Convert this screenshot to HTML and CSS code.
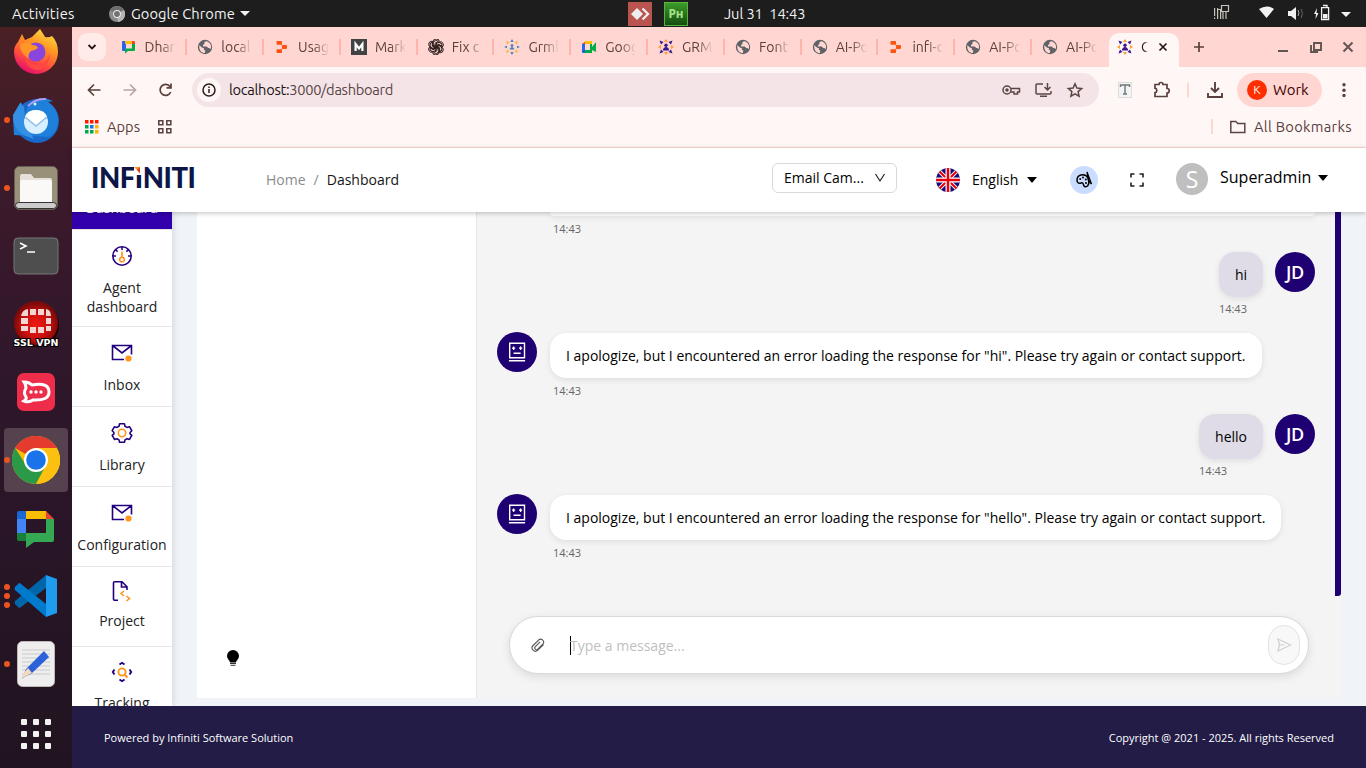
FILE: index.html
```html
<!DOCTYPE html>
<html lang="en">
<head>
<meta charset="utf-8">
<title>Dashboard</title>
<link rel="stylesheet" href="styles.css">
</head>
<body>
<svg width="0" height="0" class="defs">
  <symbol id="globe" viewBox="0 0 16 16"><circle cx="8" cy="8" r="7.2" fill="#5f6368"/><path d="M2.2 6.2l3.2 2.6 1.7.4-.3 1.6 1.5.8-.4 2.4C4.5 14 2 11.500 2.200 6.200zM9 2.200l-1.800 1.300.4 1.600-1.700 1 .2 1.300 3.600.1 1.500 1.600 1.800.2.800 1C15 6 12.800 2.800 9 2.200z" fill="#ffd6d1"/></symbol>
  <symbol id="branch" viewBox="0 0 16 16"><g fill="#ff5310"><rect x="2.500" y="2" width="5.500" height="3.800" rx=".8"/><rect x="8" y="6.100" width="5" height="3.800" rx=".8"/><rect x="2.500" y="10.200" width="5.500" height="3.800" rx=".8"/><path d="M7.500 5l1.500 1.500h-1.500zM7.500 11l1.500-1.500h-1.500z"/></g></symbol>
  <symbol id="people" viewBox="0 0 16 16"><g fill="#ff9d2e"><path d="M8 0l2 3H6zM8 16l2-3H6zM0 8l3-2v4zM16 8l-3-2v4z"/></g><g fill="#3a168c"><circle cx="8" cy="6.300" r="1.700"/><path d="M4.800 11.500q.5-3.500 3.200-3.500t3.200 3.500z"/><path d="M1.500 1.500l4 1.500L3 5.500zM14.500 1.500l-4 1.500L13 5.500zM1.500 14.500l4-1.500L3 10.500zM14.500 14.500l-4-1.500 2.500-2.500z"/></g></symbol>
  <symbol id="people2" viewBox="0 0 16 16"><g fill="#f5b82e"><path d="M2 2l3.500 1.200L3.200 5.500zM14 2l-3.500 1.200 2.300 2.300zM2 14l3.500-1.200-2.300-2.300zM14 14l-3.500-1.200 2.300-2.300z"/></g><g fill="#4a7db8"><circle cx="8" cy="6.600" r="1.400"/><path d="M5.500 10.500q.5-2.500 2.500-2.500t2.500 2.500zM8 0l1.600 3H6.400zM8 16l1.600-3H6.400zM0 8l3-1.300v2.600zM16 8l-3-1.300v2.600z"/></g></symbol>
  <symbol id="mail" viewBox="0 0 24 20"><path d="M21.500 11.500V2.500h-19v14H14M2.500 2.500l9.500 7.500 9.500-7.500" fill="none" stroke="#24007d" stroke-width="1.600"/><circle cx="18.500" cy="15.500" r="3.100" fill="#ff951c"/></symbol>
  <symbol id="bot" viewBox="0 0 20 22"><path d="M2.700 2.200h14.800v14.600H2.700zM1.900 19.700h16.200M6.600 12.300h7" fill="none" stroke="#fff" stroke-width="1.400"/><path d="M6.600 5.500v3.400M13.600 5.500v3.400M5 7.200h3.200M12 7.200h3.200" stroke="#fff" stroke-width="1.300"/></symbol>
</svg>

<div class="topbar">
  <span class="tb-act">Activities</span>
  <svg class="tb-chrome" width="16" height="16" viewBox="0 0 16 16"><circle cx="8" cy="8" r="8" fill="#8b8b8b"/><path d="M8 8L1 4a8 8 0 0 1 14 0z" fill="#6d6d6d"/><path d="M8 8l7-4a8 8 0 0 1-6 12z" fill="#b5b5b5"/><circle cx="8" cy="8" r="3.900" fill="#eee"/><circle cx="8" cy="8" r="2.900" fill="#707070"/></svg>
  <span class="tb-app">Google Chrome</span><i class="tri tb-tri1"></i>
  <svg class="tb-any" width="24" height="24" viewBox="0 0 24 24"><rect width="24" height="24" fill="#b9544e"/><path d="M9 6l6 6-6 6-6-6z" fill="#eee"/><path d="M14.500 6.500L20 12l-5.500 5.500" fill="none" stroke="#eee" stroke-width="2.300"/></svg>
  <span class="tb-ph">Pʜ</span>
  <span class="tb-date">Jul 31&nbsp; 14:43</span>
  <svg class="tb-tray" width="144" height="18" viewBox="0 0 144 18"><g fill="none" stroke="#c8c4bc" stroke-width="1.200"><path d="M1.600 4v8m0 1.500v1.500M4.600 4v11M4.600 5.500h3V15M8.500 1.500h7v6h-7zM10 15V8M13 15V8"/></g><path d="M46 5q8-5 15 0l-7.500 9z" fill="#f2f2f2"/><path d="M75 7h3l5-4v13l-5-4h-3z" fill="#f2f2f2"/><path d="M85 6q2 3 0 6" fill="none" stroke="#aaa"/><path d="M88 5q3 4 0 9" fill="none" stroke="#666"/><path d="M104 4l-3 6h2l-.5 5 3-6h-2z" fill="#f2f2f2"/><path d="M108.600 3.600h7v12h-7zM110 1.500h4v2" fill="none" stroke="#f2f2f2" stroke-width="1.300"/><path d="M110 10h4.500v4.500H110z" fill="#f2f2f2"/><path d="M128 8h10l-5 5z" fill="#f2f2f2"/></svg>
</div>

<div class="desk">
<div class="dock">
  <div class="cell"><svg width="48" height="48" viewBox="0 0 48 48"><defs><linearGradient id="ff" x1=".8" y1="0" x2=".3" y2="1"><stop offset="0" stop-color="#ffe14a"/><stop offset=".35" stop-color="#ff9a22"/><stop offset=".7" stop-color="#ff4b3d"/><stop offset="1" stop-color="#e30a72"/></linearGradient></defs><path d="M6 14L10 6l3 6 7-3 4-4 4-4q4 6 5 8 4 1 7-1 6 6 6 16a22 22 0 0 1-44 0q0-6 4-10z" fill="url(#ff)"/><circle cx="24" cy="24" r="9.500" fill="#8a45dc"/><path d="M8 16q9-4 12 1 5 0 6 3-4 3-7 3-4 4-2 8-9-5-9-15z" fill="#ff9626"/><path d="M13 25q1 11 12 12 10 0 13-12-1 17-14 17-12-3-11-17z" fill="#ff4745"/></svg></div>
  <div class="cell"><b class="d1"></b><svg width="48" height="48" viewBox="0 0 48 48"><circle cx="25" cy="25" r="22" fill="#1869c9"/><path d="M2 39L1 20l8-14q3 5 4 12L17 9q6-8 16-7l8 3-5 1q10 7 10 18 0 12-9 17z" fill="#1f80dc"/><path d="M8 7l4 4q1 12 1 18l9 14Q0 37 1 19z" fill="#3490e5"/><circle cx="24" cy="26" r="12" fill="#d8efff"/><path d="M13 21l11 9 11-9q-2-7-11-7t-11 7z" fill="#fff"/><path d="M13 21l11 9 11-9" fill="none" stroke="#91bce8" stroke-width="1.500"/><path d="M16 10Q24 2 34 3" fill="none" stroke="#b09cf0" stroke-width="2"/><circle cx="23" cy="8" r="1.500" fill="#dceeff"/></svg></div>
  <div class="cell"><b class="d1"></b><svg width="48" height="48" viewBox="0 0 48 48"><rect x="2.500" y="2.500" width="43" height="43" rx="5" fill="#989079" stroke="#676052"/><path d="M8 12q0-2 2-2h9l3 4h16q2 0 2 2v22H8z" fill="#e5e1da"/><rect x="8" y="16" width="32" height="24" rx="2" fill="#faf9f7"/><rect x="3.500" y="38.500" width="41" height="6" rx="3" fill="#ccc" stroke="#333"/></svg></div>
  <div class="cell"><svg width="48" height="48" viewBox="0 0 48 48"><rect x="2" y="6" width="44" height="36" rx="4" fill="#4e4e4e" stroke="#777"/><path d="M8 11l6 3-6 3M15 20h8" fill="none" stroke="#fff" stroke-width="1.600"/></svg></div>
  <div class="cell"><svg width="48" height="48" viewBox="0 0 48 48"><defs><radialGradient id="sv" cx=".5" cy=".55"><stop offset="0" stop-color="#f01b12"/><stop offset=".6" stop-color="#c9100d"/><stop offset="1" stop-color="#7d0a0a"/></radialGradient></defs><circle cx="25" cy="25" r="22" fill="#200"/><circle cx="24" cy="23" r="22" fill="url(#sv)"/><g fill="#f3d5d3"><rect x="18" y="9" width="6" height="6"/><rect x="26" y="9" width="6" height="6"/><rect x="18" y="27" width="6" height="6"/><rect x="26" y="27" width="6" height="6"/><rect x="9" y="18" width="7" height="6"/><rect x="9" y="26" width="7" height="5"/><rect x="34" y="18" width="5" height="6"/><rect x="34" y="26" width="5" height="5"/><path d="M16 9v7H9q1-6 7-7zM34 9v7h5q0-6-5-7z"/></g><text x="24" y="46" text-anchor="middle" class="ssl">SSL VPN</text></svg></div>
  <div class="cell"><svg width="48" height="48" viewBox="0 0 48 48"><rect x="5" y="5" width="38" height="38" rx="7" fill="#ed2d49"/><path d="M12 14q5 0 8 3 17-3 17 7 0 9-16 8-4 3-9 1 3-2 2-4-3-4 0-9 0-3-2-6z" fill="none" stroke="#fff" stroke-width="3"/><g fill="#fff"><circle cx="19" cy="24" r="1.700"/><circle cx="24" cy="24" r="1.700"/><circle cx="29" cy="24" r="1.700"/></g></svg></div>
  <div class="cell"><b class="d1"></b><div class="activeapp"><svg width="48" height="48" viewBox="0 0 48 48"><circle cx="24" cy="24" r="24" fill="#fdbd00"/><path d="M24 24L3.200 12a24 24 0 0 1 41.600 0z" fill="#e33b2e"/><path d="M3.200 12L14.500 30 24 24l9.500 6L24 48A24 24 0 0 1 3.200 12z" fill="#2a9a48"/><path d="M34.400 30L24 48a24 24 0 0 0 20.800-36H24z" fill="#fcc010"/><circle cx="24" cy="24" r="12" fill="#fff"/><circle cx="24" cy="24" r="9.800" fill="#1a73e8"/></svg></div></div>
  <div class="cell"><svg width="48" height="48" viewBox="0 0 48 48"><path d="M5 9q0-2 2-2h7v8H5z" fill="#1967d2"/><path d="M14 7h20v8H14z" fill="#fbbc04"/><path d="M34 7l8 8h-8z" fill="#ea4335"/><path d="M5 15h9v14H5z" fill="#4285f4"/><path d="M5 29h9v8H7q-2 0-2-2z" fill="#188038"/><path d="M34 15h8v21q0 2-2 2H22l-8 6V29h20z" fill="#34a853"/></svg></div>
  <div class="cell"><b class="d1 dm"></b><b class="d1"></b><b class="d1 dp"></b><svg width="48" height="48" viewBox="0 0 48 48"><path d="M3 32l4 4q1 0 2-1L34 16V3L3 29q-1 1 0 3z" fill="#0065a9"/><path d="M3 15l4-4q1 0 2 1l25 20v13L3 18q-1-1 0-3z" fill="#007acc"/><path d="M34 3l11 4v34l-11 4z" fill="#1f9cf0"/></svg></div>
  <div class="cell"><b class="d1"></b><svg width="48" height="48" viewBox="0 0 48 48"><rect x="5.500" y="1.500" width="37" height="45" rx="5" fill="#eee" stroke="#bdb8b5"/><path d="M10 10h28M10 14h28M10 18h28M10 22h28M10 26h28M10 30h28M10 34h28" stroke="#c9c9c9"/><path d="M32 11l5 6-18 17-7 3-2 2 1-3 3-7z" fill="#2b62d9"/><path d="M16 28l4 5-8 4-3 2 2-5z" fill="#f5d9b8"/></svg></div>
  <div class="cell last"><svg width="30" height="30" viewBox="0 0 30 30" fill="#f2f2f0"><g id="r3"><rect width="6" height="6" rx="1"/><rect x="12" width="6" height="6" rx="1"/><rect x="24" width="6" height="6" rx="1"/></g><use href="#r3" y="12"/><use href="#r3" y="24"/></svg></div>
</div>

<div class="browser">
  <div class="tabs">
    <div class="tabmenu"><svg width="10" height="10" viewBox="0 0 10 10"><path d="M1.500 3L5 6.500 8.500 3" fill="none" stroke="#2b1512" stroke-width="1.800"/></svg></div>
    <div class="tab"><svg viewBox="0 0 16 16"><path d="M1 3q0-1 1-1h3v10H2q-1 0-1-1z" fill="#2a62ee"/><path d="M4 2h9q1 0 1 1v2H4z" fill="#fbbc04"/><path d="M11 5h3v6q0 1-1 1H7l-3 2.500V9.500h7z" fill="#00ac47"/><path d="M11 2h2l1 1v2h-3z" fill="#ea4335"/></svg><span>Dhar</span></div>
    <div class="tab"><svg><use href="#globe"/></svg><span>local</span></div>
    <div class="tab"><svg><use href="#branch"/></svg><span>Usag</span></div>
    <div class="tab"><svg viewBox="0 0 16 16"><rect width="16" height="16" fill="#424242"/><path d="M4.600 12V5L8 9.500 11.400 5v7" fill="none" stroke="#fff" stroke-width="2.200"/></svg><span>Mark</span></div>
    <div class="tab"><svg viewBox="0 0 16 16" fill="none" stroke="#33221f" stroke-width="1"><g id="petal"><path d="M8 4.800L11.300 3a3 3 0 0 1 2.900 5.200M8 4.800V8.300l3 1.800M5.300 3.600a3 3 0 0 1 5-1.100L7 4.300v3.900"/></g><use href="#petal" transform="rotate(120 8 8)"/><use href="#petal" transform="rotate(240 8 8)"/><use href="#petal" transform="rotate(60 8 8)"/><use href="#petal" transform="rotate(180 8 8)"/><use href="#petal" transform="rotate(300 8 8)"/></svg><span>Fix c</span></div>
    <div class="tab"><svg><use href="#people2"/></svg><span>Grml</span></div>
    <div class="tab"><svg viewBox="0 0 16 16"><path d="M1 5l4-3v3z" fill="#ea4335"/><path d="M1 5h3v6H1z" fill="#2a62ee"/><path d="M1 11h3v3H2q-1 0-1-1z" fill="#1967d2"/><path d="M4 2h7v3H4z" fill="#fbbc04"/><path d="M4 11h7V8l4-5v10l-4-2v3H4z" fill="#00ac47"/><path d="M9 5h2v6H9z" fill="#00ac47"/></svg><span>Goog</span></div>
    <div class="tab"><svg><use href="#people"/></svg><span>GRM</span></div>
    <div class="tab"><svg><use href="#globe"/></svg><span>Font</span></div>
    <div class="tab"><svg><use href="#globe"/></svg><span>AI-Po</span></div>
    <div class="tab"><svg><use href="#branch"/></svg><span>infi-c</span></div>
    <div class="tab"><svg><use href="#globe"/></svg><span>AI-Po</span></div>
    <div class="tab nosep"><svg><use href="#globe"/></svg><span>AI-Po</span></div>
    <div class="tab on"><svg><use href="#people"/></svg><span>C</span><svg class="x" viewBox="0 0 10 10"><path d="M1.500 1.500l7 7m0-7l-7 7" stroke="#2b1512" stroke-width="1.700"/></svg></div>
    <svg class="winctl" width="170" height="20" viewBox="0 0 170 20" fill="none" stroke="#5f5552" stroke-width="2"><path d="M14 10h10M19 5v10" stroke="#5a403c" stroke-width="1.700"/><path d="M98 14h10M134 6h7v7h-7zM131 8v7h7" stroke-width="1.900"/><path d="M163.500 5.500l9 9m0-9l-9 9" stroke-width="1.900"/></svg>
  </div>
  <div class="toolbar">
    <svg class="nav" width="100" height="20" viewBox="0 0 100 20" fill="none" stroke-width="1.700"><path d="M21.500 10H10M15 4.500L9.500 10l5.500 5.500" stroke="#5a403c"/><path d="M44.500 10h11.500M51 4.500l5.500 5.500-5.500 5.500" stroke="#b9a5a2"/><path d="M91 6.500A5.500 5.500 0 1 0 91.700 12M92 3.500v4.300h-4.500" stroke="#5a403c"/></svg>
    <div class="url">
      <span class="info"><svg width="16" height="16" viewBox="0 0 16 16" fill="none" stroke="#2b1c1a" stroke-width="1.500"><circle cx="8" cy="8" r="6"/><path d="M8 7v4M8 4.500v1.400"/></svg></span>
      <span class="addr">localhost:<em>3000/dashboard</em></span>
      <svg class="urlic" width="84" height="20" viewBox="0 0 84 20" fill="none" stroke="#5a4543" stroke-width="1.500"><circle cx="6" cy="10" r="4"/><circle cx="6" cy="10" r="1" fill="#5a4543"/><path d="M10 8.500h8.500V12h-2v2H13v-2h-3"/><path d="M42 4h-6q-1 0-1 1v8q0 1 1 1h13q1 0 1-1v-2M39 16.200h7M46.500 3v7m-3-3l3 3 3-3"/><path d="M74 3.800l1.900 4.300 4.700.4-3.500 3.100 1 4.600-4.100-2.400-4.100 2.400 1-4.600-3.500-3.100 4.700-.4z"/></svg>
    </div>
    <svg class="ext" width="120" height="24" viewBox="0 0 120 24" fill="none" stroke="#5a403c" stroke-width="1.700"><rect x="6.500" y="4.500" width="13" height="15" fill="#f4f4f4" stroke="#ddd" stroke-width="1"/><path d="M8.500 9V7h9v2M13 7v9m-2 0h4" stroke="#6d7878" stroke-width="1.400"/><path d="M43 6.500h4a2 2 0 0 1 4 0h4v4a2 2 0 0 1 0 4.500v3.500H43v-3.800a2.300 2.300 0 0 0 0-4.500z"/><path d="M76 4.500v15" stroke="#ffd0ca"/><path d="M103 4v10m-4-4l4 4 4-4M96 15v4h14v-4" stroke-width="1.900"/></svg>
    <div class="work"><i>K</i><span>Work</span></div>
    <svg class="dots" width="6" height="18" viewBox="0 0 6 18" fill="#5a403c"><circle cx="3" cy="3.800" r="1.700"/><circle cx="3" cy="9.200" r="1.700"/><circle cx="3" cy="14.500" r="1.700"/></svg>
  </div>
  <div class="marks">
    <svg width="14" height="14" viewBox="0 0 14 14"><path fill="#ff1a00" d="M0 0h3.500v3.500H0zM5 0h3.500v3.500H5zM10 0h3.500v3.500H10z"/><path fill="#00a651" d="M0 5h3.500v3.500H0zM0 10h3.500v3.500H0zM5 10h3.500v3.500H5z"/><path fill="#1a73e8" d="M5 5h3.500v3.500H5z"/><path fill="#fbb400" d="M10 5h3.500v3.500H10zM10 10h3.500v3.500H10z"/></svg>
    <span class="apps">Apps</span>
    <svg width="16" height="16" viewBox="0 0 16 16" fill="none" stroke="#5a4543" stroke-width="1.600"><path d="M1.800 1.800h4v4h-4zM9.800 1.800h4v4h-4zM1.800 9.800h4v4h-4zM9.800 9.800h4v4h-4z"/></svg>
    <i class="msep"></i>
    <svg width="18" height="14" viewBox="0 0 18 14" fill="none" stroke="#5a4543" stroke-width="1.500"><path d="M1.800 1.500h5l2 2h7v9h-14z"/></svg>
    <span class="allb">All Bookmarks</span>
  </div>

  <div class="apphead">
    <div class="logo"><span>INFINITI</span><svg width="8" height="8" viewBox="0 0 8 8"><path d="M0 0h8v8H0z" fill="#fff"/><path d="M0 0h6L4 4z" fill="#f59b1d"/><path d="M3 3l3-3v6.500z" fill="#e2382c"/></svg></div>
    <div class="crumb"><span>Home</span><i>/</i><b>Dashboard</b></div>
    <div class="select"><span>Email Cam...</span><svg width="12" height="10" viewBox="0 0 12 10"><path d="M1.500 1L6 8l4.500-7" fill="none" stroke="#222" stroke-width="1.200"/></svg></div>
    <svg class="flag" width="24" height="24" viewBox="0 0 24 24"><defs><clipPath id="fc"><circle cx="12" cy="12" r="12"/></clipPath></defs><g clip-path="url(#fc)"><path fill="#1a0a78" d="M0 0h24v24H0z"/><path d="M0 0l24 24M24 0L0 24" stroke="#fff" stroke-width="4"/><path d="M0 0l24 24M24 0L0 24" stroke="#e8000b" stroke-width="2.200"/><path d="M12 0v24M0 12h24" stroke="#fff" stroke-width="5"/><path d="M12 0v24M0 12h24" stroke="#e8000b" stroke-width="2.500"/></g></svg>
    <span class="lang">English</span><i class="tri dark"></i>
    <span class="pal"><svg width="18" height="18" viewBox="0 0 18 18" fill="none" stroke="#000" stroke-width="1.500"><path d="M2 9q0-4 4-5 5-1 7 3 2 5-.5 8-3 2-4-1-.5-3-2.500-2-4 1-4-3z"/><path d="M12 1l4.500 12-3-3.500z" stroke-width="1.300"/><g fill="#000" stroke="none"><circle cx="5.200" cy="8" r="1"/><circle cx="8" cy="6.500" r="1"/><circle cx="10.800" cy="8.500" r="1"/><circle cx="11" cy="12" r="1"/></g></svg></span>
    <svg class="full" width="14" height="14" viewBox="0 0 14 14" fill="none" stroke="#222" stroke-width="1.600"><path d="M1 4.500V1h3.500M9.500 1H13v3.500M13 9.500V13H9.500M4.500 13H1V9.500"/></svg>
    <span class="ava">S</span>
    <span class="who">Superadmin</span><i class="tri dark up"></i>
  </div>

  <div class="main">
    <div class="side">
      <div class="item cur"><span>Dashboard</span></div>
      <div class="item agent"><svg width="24" height="24" viewBox="0 0 24 24" fill="none"><circle cx="12" cy="12" r="9.200" stroke="#24007d" stroke-width="1.600"/><path d="M12 3v3M3 12h3M18 12h3M5.600 5.600l2 2M18.400 5.600l-2 2" stroke="#24007d" stroke-width="1.500"/><circle cx="12" cy="15.500" r="2.300" stroke="#ff951c" stroke-width="1.600"/><path d="M12 13V7.500" stroke="#ff951c" stroke-width="1.700"/></svg><span>Agent<br>dashboard</span></div>
      <div class="item"><svg width="24" height="24" viewBox="0 -2 24 24"><use href="#mail" width="24" height="20"/></svg><span>Inbox</span></div>
      <div class="item"><svg width="24" height="24" viewBox="0 0 24 24" fill="none"><path d="M9.600 2.800h4.800l.6 2.500 2 1.100 2.500-.7 2.300 4-1.700 1.800v1.400l1.700 1.500-2.300 4-2.500-.7-2 1.200-.6 2.300H9.600L9 18.900l-2-1.200-2.500.7-2.300-4 1.700-1.500v-1.400L2.200 9.700l2.300-4 2.500.7 2-1.100z" stroke="#24007d" stroke-width="1.600" stroke-linejoin="round"/><circle cx="12" cy="12" r="3.700" stroke="#ff951c" stroke-width="1.600"/></svg><span>Library</span></div>
      <div class="item"><svg width="24" height="24" viewBox="0 -2 24 24"><use href="#mail" width="24" height="20"/></svg><span>Configuration</span></div>
      <div class="item proj"><svg width="24" height="24" viewBox="0 0 24 24" fill="none" stroke-width="1.600"><path d="M8 21.200H4.500q-1 0-1-1V3.800q0-1 1-1H12l5 5V11M11.500 3v5H17" stroke="#24007d"/><path d="M14 12l-3 2.500 3 2.500M16.500 17l3 2.500-3 2.500" stroke="#ff951c"/></svg><span>Project</span></div>
      <div class="item track"><svg width="24" height="24" viewBox="0 0 24 24" fill="none" stroke-width="1.900"><path d="M9.500 4.500L12 2.800l2.500 1.700M9.500 19.500l2.500 1.700 2.500-1.700M4.500 9.500L2.800 12l1.700 2.500M19.500 9.500l1.700 2.500-1.700 2.500" stroke="#24007d"/><circle cx="12" cy="12" r="3.600" stroke="#ff951c"/><path d="M14.500 14.500l3 3" stroke="#ff951c"/></svg><span>Tracking</span></div>
    </div>
    <div class="panel"><svg width="14" height="18" viewBox="0 0 14 18"><path d="M7 1a6 6 0 0 1 6 6q0 2.500-2 4.500-.8.700-1 2H4q-.2-1.300-1-2Q1 9.500 1 7a6 6 0 0 1 6-6z"/><path d="M4 14.500h6M4.500 16.300h5" stroke="#333" stroke-width="1"/></svg></div>
    <div class="chat">
      <div class="msgs">
        <div class="row bot first"><div><p class="bub"></p><small>14:43</small></div></div>
        <div class="row me r1"><div><p class="bub">hi</p><small>14:43</small></div><b class="av">JD</b></div>
        <div class="row bot r2"><b class="av"><svg width="20" height="22"><use href="#bot"/></svg></b><div><p class="bub">I apologize, but I encountered an error loading the response for "hi". Please try again or contact support.</p><small>14:43</small></div></div>
        <div class="row me r3"><div><p class="bub">hello</p><small>14:43</small></div><b class="av">JD</b></div>
        <div class="row bot r4"><b class="av"><svg width="20" height="22"><use href="#bot"/></svg></b><div><p class="bub">I apologize, but I encountered an error loading the response for "hello". Please try again or contact support.</p><small>14:43</small></div></div>
      </div>
      <div class="composer">
        <svg width="16" height="16" viewBox="0 0 16 16" fill="none" stroke="#555" stroke-width="1.100"><path d="M13.500 7.500l-5.700 5.700a3.300 3.300 0 0 1-4.700-4.700L8.800 2.800a3 3 0 0 1 4.200 4.200l-5.400 5.400a1.800 1.800 0 0 1-2.500-2.500l5-5"/></svg>
        <i class="caret"></i><span class="ph">Type a message...</span>
        <span class="send"><svg width="16" height="16" viewBox="0 0 16 16" fill="none" stroke="#cfcfcf" stroke-width="1.200"><path d="M2 2l12.500 6L2 14l1.500-6zM3.500 8h5"/></svg></span>
      </div>
    </div>
  </div>
  <div class="foot"><span>Powered by Infiniti Software Solution</span><span class="copy">Copyright @ 2021 - 2025. All rights Reserved</span></div>
</div>
</div>
</body>
</html>
```
FILE: styles.css
```css
* { box-sizing: border-box; }
body { margin: 0; width: 1366px; height: 768px; overflow: hidden; font: 14px/20px "Open Sans", "Noto Sans", sans-serif; color: #000; }
svg { display: block; flex: none; }
p { margin: 0; }
i, em { font-style: normal; }
span { white-space: nowrap; }
.defs { position: absolute; }

.topbar { height: 27px; background: #1d1d1d; color: #f2f2f2; display: flex; align-items: center; font-family: Ubuntu, "Noto Sans", sans-serif; font-size: 14.67px; }
.tb-act { margin-left: 12px; width: 97px; letter-spacing: .25px; }
.tb-app { margin-left: 6px; width: 104px; letter-spacing: .08px; }
.tri { flex: none; border: 5px solid transparent; border-top-color: #f2f2f2; border-bottom: 0; }
.tb-tri1 { margin-left: 5px; }
.tb-any { margin-left: 378px; }
.tb-ph { width: 24px; height: 24px; margin-left: 12px; background: linear-gradient(#3c9a2c, #154d10); border: 1px solid #55b53c; color: #a8e58a; font: bold 12px/22px "Noto Sans", sans-serif; text-align: center; }
.tb-date { margin-left: 36px; width: 82px; letter-spacing: -.1px; }
.tb-tray { margin-left: 407px; margin-top: -1px; }

.desk { display: flex; height: 741px; }
.dock { width: 72px; flex: none; background: linear-gradient(#4a2024 0, #3c1a2b 20%, #2c162a 55%, #211420 100%); overflow: hidden; }
.cell { position: relative; height: 68px; display: flex; align-items: center; justify-content: center; }
.cell:first-child { margin-top: -9px; }
.cell.last { height: 72px; }
.d1 { position: absolute; left: 4px; top: 31px; width: 6px; height: 6px; border-radius: 50%; background: #e95420; }
.d1.dm { top: 22px; }
.d1.dp { top: 40px; }
.activeapp { width: 64px; height: 64px; border-radius: 4px; background: #56424f; display: flex; align-items: center; justify-content: center; }
.ssl { font: bold 9.500px "DejaVu Sans", sans-serif; fill: #fff; stroke: #000; stroke-width: 2px; paint-order: stroke; }

.browser { width: 1294px; display: flex; flex-direction: column; background: #fff7f5; }
.tabs, .toolbar, .marks { font-family: Ubuntu, "Noto Sans", sans-serif; }
.tabs { height: 40px; flex: none; background: #ffd6d1; display: flex; align-items: center; color: #5a403c; font-size: 14px; }
.tabmenu { width: 28px; height: 28px; margin: 0 4.500px 0 6px; border-radius: 9px; background: #ffece9; display: flex; align-items: center; justify-content: center; flex: none; }
.tab { width: 76.8px; flex: none; height: 16px; padding-left: 10px; display: flex; align-items: center; border-right: 2px solid #ffb3aa; }
.tab svg { width: 16px; height: 16px; margin-right: 8px; }
.tab span { width: 31px; overflow: hidden; -webkit-mask-image: linear-gradient(90deg, #000 50%, transparent); mask-image: linear-gradient(90deg, #000 50%, transparent); }
.tab.nosep { border-color: transparent; width: 76px; }
.tab.on { width: 70px; height: 34px; margin: 6px 0 0 .9px; padding: 0 0 6px 8px; border: 0; border-radius: 10px 10px 0 0; background: #fff7f5; color: #2b1512; }
.tab.on span { width: 7px; margin-right: 10px; }
.tab.on svg.x { width: 10px; height: 10px; margin: 0; }
.winctl { overflow: visible; margin-left: 1px; }
.toolbar { height: 46px; flex: none; display: flex; align-items: center; }
.nav { margin-left: 7px; }
.url { margin-left: 13px; width: 907px; height: 34px; border-radius: 17px; background: #f4e4e8; display: flex; align-items: center; padding-left: 5px; flex: none; }
.info { width: 24px; height: 24px; border-radius: 50%; background: #fff7f5; display: flex; align-items: center; justify-content: center; }
.addr { margin-left: 8px; color: #201311; font-size: 14.67px; letter-spacing: -.3px; flex: 1; }
.addr em { color: #5a4543; }
.urlic { margin-right: 14px; }
.ext { margin-left: 13px; }
.work { margin-left: 5px; width: 85px; height: 34px; border-radius: 17px; background: #ffd6d1; display: flex; align-items: center; padding-left: 10px; color: #410002; font-size: 15px; flex: none; }
.work i { width: 20px; height: 20px; margin-right: 6px; border-radius: 50%; background: #ff2e00; color: #fff; font-size: 12px; text-align: center; }
.dots { margin-left: 19px; }
.marks { height: 35px; flex: none; border-bottom: 1px solid #ffd9d5; display: flex; align-items: center; padding: 0 14px 7px 13px; color: #5a403c; font-size: 14.67px; }
.apps { width: 50px; margin-left: 8px; }
.msep { width: 2px; height: 15px; margin-left: auto; margin-right: 16px; background: #ffd6d1; }
.allb { width: 98px; margin-left: 7px; letter-spacing: .3px; }

.apphead { position: relative; z-index: 2; height: 64px; flex: none; background: #fff; box-shadow: 0 1px 5px rgba(0,0,0,.25); display: flex; align-items: center; }
.logo { position: relative; width: 104px; margin-left: 19px; margin-top: -4px; color: #0d1648; font: 900 27.500px/28px Lato, sans-serif; letter-spacing: -.45px; }
.logo svg { position: absolute; left: 43px; top: 3px; }
.crumb { margin-left: 71px; width: 506px; display: flex; color: #8c8c8c; }
.crumb i { margin: 0 8px; }
.crumb b { font-weight: 400; color: #141414; }
.select { width: 125px; height: 30px; margin-top: -4px; border: 1px solid #d9d9d9; border-radius: 6px; display: flex; align-items: center; justify-content: space-between; padding: 0 10px 0 11px; }
.flag { margin-left: 39px; }
.lang { margin-left: 12px; width: 55px; }
.tri.dark { border: 5.500px solid transparent; border-top: 6px solid #000; border-bottom: 0; }
.pal { width: 28px; height: 28px; margin-left: 33px; border-radius: 50%; background: #cadcff; display: flex; align-items: center; justify-content: center; }
.full { margin-left: 32px; }
.ava { width: 32px; height: 32px; margin-left: 32px; margin-top: -2px; border-radius: 50%; background: #bfbfbf; color: #fff; font-size: 23px; line-height: 32px; text-align: center; }
.who { width: 98px; margin-left: 12px; margin-top: -6px; font-size: 16px; }
.tri.up { margin-top: -4px; }

.main { height: 494px; flex: none; background: #f0f3f7; display: flex; overflow: hidden; }
.side { width: 100px; flex: none; background: #fff; box-shadow: 1px 0 7px rgba(0,0,0,.13); overflow: hidden; color: #222; clip-path: inset(0 -12px 0 0); }
.item { height: 80px; border-bottom: 1px solid #e6e6e6; padding-top: 14px; display: flex; flex-direction: column; align-items: center; line-height: 19px; text-align: center; }
.item span { margin-top: 10px; }
.item.cur { height: 18px; background: #3300ad; color: #fff; padding: 0; }
.item.cur span { margin-top: -14px; }
.item.agent { height: 97px; }
.item.proj { padding-top: 12px; }
.item.proj span { margin-top: 8px; }
.item.track { padding-top: 13px; }
.item.track span { margin-top: 9px; }
.panel { width: 280px; height: 486px; margin-left: 25px; flex: none; background: #fff; border-right: 1px solid #e4e4e4; padding: 437px 0 0 29px; }
.chat { width: 864px; height: 486px; flex: none; background: #f4f4f4; }
.msgs { height: 384px; border-right: 6px solid #1e0073; border-radius: 0 0 3px 0; padding: 0 20px; }
.row { display: flex; }
.row.bot .bub { background: #fff; }
.row.me { justify-content: flex-end; }
.row.me .bub { background: #dfdce8; }
.row.me .av { margin-left: 12px; }
.row.bot .av { margin-right: 13px; }
.av { width: 40px; height: 40px; flex: none; border-radius: 50%; background: #1e0073; color: #fff; display: flex; align-items: center; justify-content: center; font: 600 18px/40px "Open Sans", sans-serif; letter-spacing: -.3px; }
.bub { height: 45px; padding: 0 16px; border-radius: 16px; line-height: 46px; box-shadow: 0 2px 6px rgba(0,0,0,.09); white-space: nowrap; }
small { display: block; font-size: 11px; line-height: 16px; margin-top: 4px; color: #666; }
.row.bot small { margin: 5px 0 0 3px; }
.row.first { height: 40px; padding-left: 53px; }
.first .bub { width: 765px; height: 4px; border-radius: 0 0 16px 16px; background: #f9f9f9; }
.row.r1, .row.r3 { height: 80px; }
.row.r2, .row.r4 { height: 82px; }
.row.r2 .bub, .row.r4 .bub { margin-top: 1px; }
.composer { width: 800px; height: 58px; margin: 20px 0 0 32px; border: 1px solid #d9d9d9; border-radius: 29px; background: #fff; box-shadow: 0 3px 10px rgba(0,0,0,.1); display: flex; align-items: center; padding: 0 8px 0 20px; }
.caret { width: 1px; height: 19px; background: #000; margin-left: 24px; }
.ph { color: #bfbfbf; flex: 1; padding-top: 2px; margin-left: -1px; }
.send { width: 32px; height: 40px; border: 1px solid #e3e3e3; border-radius: 16px; background: #f8f8f8; display: flex; align-items: center; justify-content: center; }
.foot { height: 62px; flex: none; background: #221c46; color: #fff; font-size: 11px; display: flex; align-items: center; justify-content: space-between; padding: 2px 32px 0; }
```
